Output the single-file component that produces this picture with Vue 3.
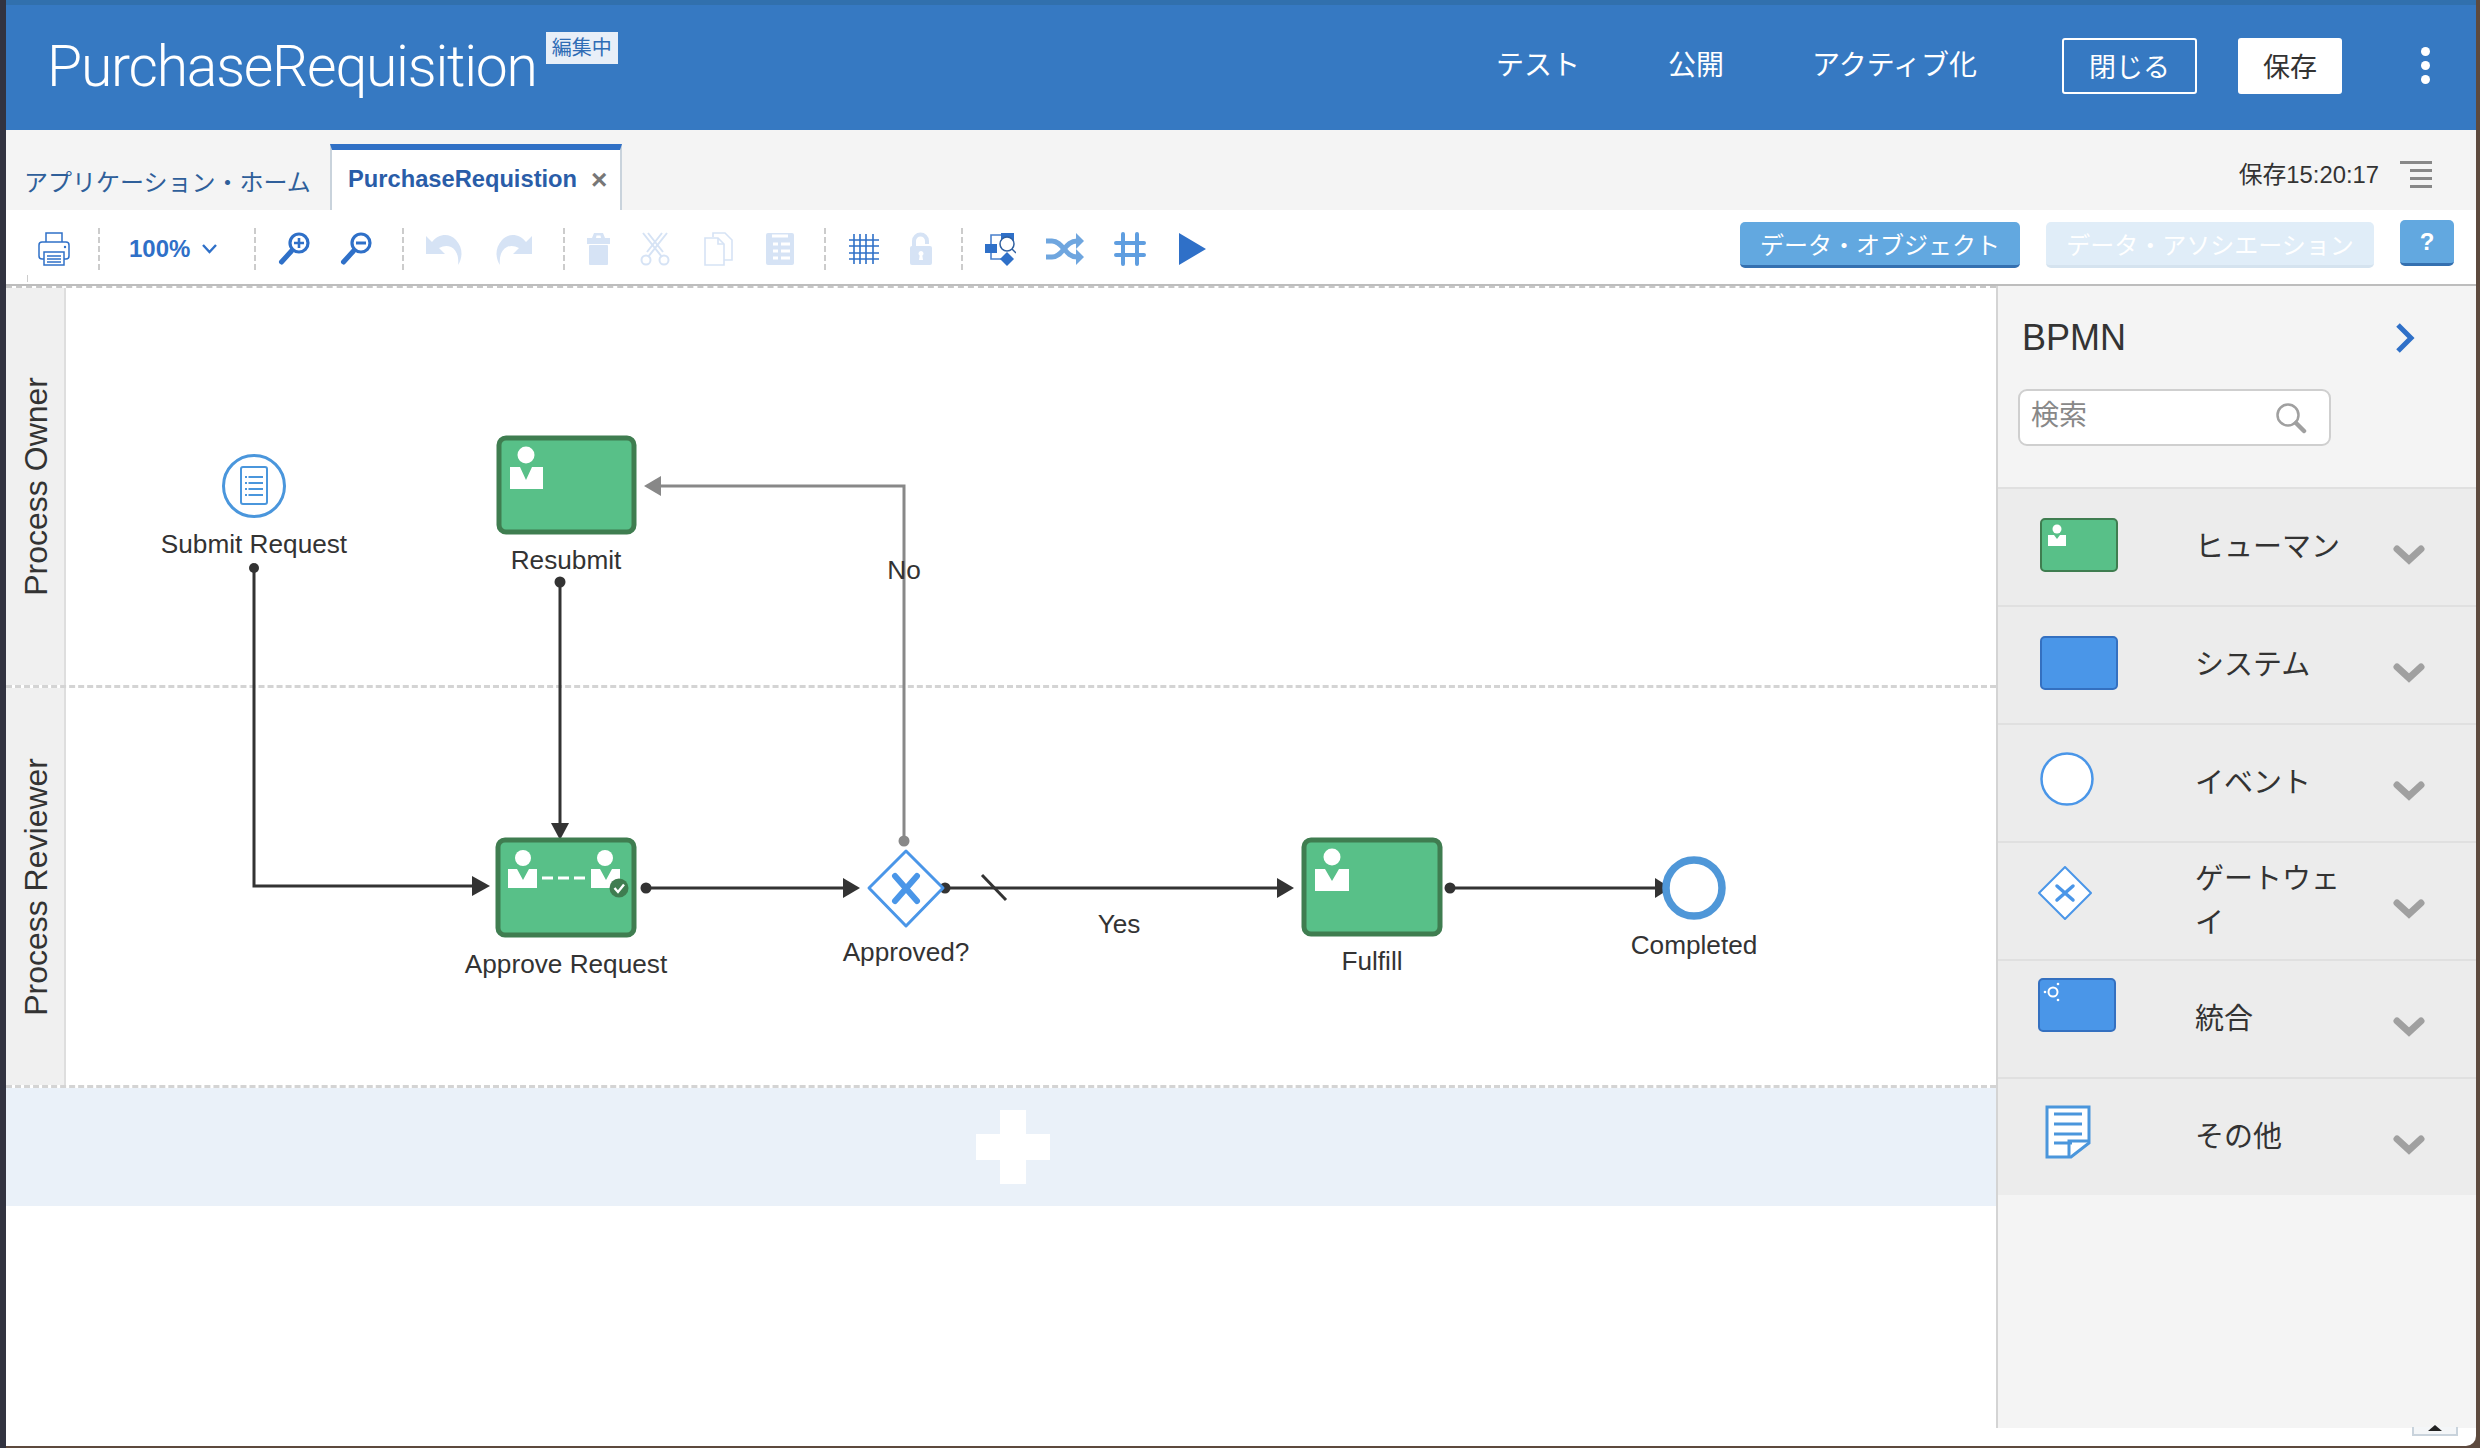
<script setup>
const navItems = ['テスト', '公開', 'アクティブ化']

const paletteRows = [
  { key: 'human', label: 'ヒューマン' },
  { key: 'system', label: 'システム' },
  { key: 'event', label: 'イベント' },
  { key: 'gateway', label: 'ゲートウェイ' },
  { key: 'integration', label: '統合' },
  { key: 'other', label: 'その他' }
]
</script>

<template>
  <div class="page">
    <div class="window">
      <header class="topbar">
        <div class="brand">
          <h1 class="app-title">PurchaseRequisition</h1>
          <span class="badge">編集中</span>
        </div>
        <nav class="nav">
          <a v-for="item in navItems" :key="item" class="nav-link">{{ item }}</a>
        </nav>
        <button class="btn-close">閉じる</button>
        <button class="btn-save">保存</button>
        <div class="more"><i></i><i></i><i></i></div>
      </header>

      <div class="tabs">
        <div class="tab-home">アプリケーション・ホーム</div>
        <div class="tab-active">
          <span class="tab-name">PurchaseRequistion</span>
          <span class="tab-x">×</span>
        </div>
        <div class="status">保存15:20:17</div>
        <div class="status-menu"><i></i><i></i><i></i><i></i></div>
      </div>

      <div class="toolbar">
        <span class="tick"></span>
        <div class="tool-group g1">
          <svg width="32" height="34" viewBox="0 0 32 34" fill="none" stroke="#2f70c8" stroke-width="1.5">
            <path d="M8 10V1h16v9" />
            <rect x="1" y="10" width="30" height="17" rx="3" />
            <rect x="6" y="20" width="20" height="13" fill="#fff" />
            <path d="M9 24h14M9 27h14M9 30h14" />
            <circle cx="27" cy="15" r="1.2" fill="#2f70c8" stroke="none" />
          </svg>
        </div>
        <span class="sep"></span>
        <div class="tool-group g2">
          <span class="zoom-value">100%</span>
          <svg width="15" height="10" viewBox="0 0 15 10" fill="none" stroke="#2f70c8" stroke-width="2.4">
            <path d="M1 1l6.500 7L14 1" />
          </svg>
        </div>
        <span class="sep"></span>
        <div class="tool-group">
          <svg width="32" height="34" viewBox="0 0 32 34" fill="none" stroke="#2f70c8">
            <circle cx="21" cy="11" r="9" stroke-width="3.200" />
            <path d="M13.500 19L3.500 30" stroke-width="5" stroke-linecap="round" />
            <path d="M21 6v10M16 11h10" stroke-width="2.600" />
          </svg>
          <svg width="32" height="34" viewBox="0 0 32 34" fill="none" stroke="#2f70c8">
            <circle cx="21" cy="11" r="9" stroke-width="3.200" />
            <path d="M13.500 19L3.500 30" stroke-width="5" stroke-linecap="round" />
            <path d="M16 11h10" stroke-width="3" />
          </svg>
        </div>
        <span class="sep"></span>
        <div class="tool-group">
          <svg width="38" height="34" viewBox="0 0 38 34" fill="#d6e3f5">
            <path d="M0 4l6 6C12 2 23 0 30 8c8 9 6 19 2 25 1-8-1-15-7-18-4-2-8-1-12 1l6 6H0z" />
          </svg>
          <svg width="39" height="34" viewBox="0 0 39 34" fill="#d6e3f5">
            <path d="M38 4l-6 6C26 2 15 0 8 8c-8 9-6 19-2 25-1-8 1-15 7-18 4-2 8-1 12 1l-6 6h19z" />
          </svg>
        </div>
        <span class="sep"></span>
        <div class="tool-group">
          <svg width="23" height="34" viewBox="0 0 23 34" fill="#d6e3f5">
            <path d="M7 1h9l2 5h5v6H0V6h5zM9.500 3.500L9 6h5l-.5-2.500z" fill-rule="evenodd" />
            <rect x="2" y="13" width="19" height="20" rx="1" />
          </svg>
          <svg width="30" height="34" viewBox="0 0 30 34" fill="none" stroke="#d6e3f5" stroke-width="2">
            <path d="M3 1l19 24M8 1l15 19M27 1L8 25M22 1L7 20" />
            <circle cx="6" cy="28" r="4.500" />
            <circle cx="24" cy="28" r="4.500" />
          </svg>
          <svg width="36" height="34" viewBox="0 0 36 34" fill="none" stroke="#d6e3f5" stroke-width="1.600">
            <path d="M13 5V1h12l7 7v20h-8" />
            <path d="M5 6h13l6 6v21H5z" fill="#fff" />
            <path d="M18 6v6h6" />
          </svg>
          <svg width="28" height="34" viewBox="0 0 28 34">
            <rect y="1" width="28" height="32" rx="2" fill="#d6e3f5" />
            <path d="M6 4h16M7 12h5M15 12h9M7 19h5M15 19h9M7 26h5M15 26h9" stroke="#fff" stroke-width="3" />
          </svg>
        </div>
        <span class="sep"></span>
        <div class="tool-group g6">
          <svg width="31" height="34" viewBox="0 0 31 34" fill="none" stroke="#2f70c8" stroke-width="1.600">
            <path d="M6 2v30M12 2v30M18 2v30M25 2v30" />
            <path d="M1 8h30M1 14h30M1 21h30M1 27h30" />
          </svg>
          <svg width="24" height="34" viewBox="0 0 24 34" fill="#d6e3f5">
            <path d="M3 15V9a8.500 8.500 0 0 1 17 0v3h-4V9a4.500 4.500 0 0 0-9 0v6z" />
            <rect x="1" y="14" width="22" height="19" rx="2" />
            <path d="M12 19a2.500 2.500 0 0 1 1.300 4.600L14 28h-4l.7-4.400A2.500 2.500 0 0 1 12 19z" fill="#fff" />
          </svg>
        </div>
        <span class="sep"></span>
        <div class="tool-group">
          <svg width="31" height="34" viewBox="0 0 31 34">
            <path d="M6 12V3h10M6 20v7h10" fill="none" stroke="#4a80cc" stroke-width="1.600" />
            <rect x="16" y="1" width="13" height="10" fill="#2f70c8" />
            <rect y="12" width="12" height="9" fill="#2f70c8" />
            <path d="M22 20l7 7-7 7-7-7z" fill="#2f70c8" />
            <circle cx="22" cy="12" r="7" fill="#fff" stroke="#2f5f9f" stroke-width="1.500" />
            <path d="M27 17l4 4" stroke="#2f5f9f" stroke-width="1.500" />
          </svg>
          <svg width="38" height="34" viewBox="0 0 38 34" fill="none" stroke="#6fa6df" stroke-width="5">
            <path d="M0 9h6c11 0 13 16 25 16" />
            <path d="M0 25h6c11 0 13-16 25-16" />
            <path d="M30 1l8 8-8 8zM30 17l8 8-8 8z" fill="#6fa6df" stroke="none" />
          </svg>
          <svg width="32" height="34" viewBox="0 0 32 34" fill="none" stroke="#5f9ee0" stroke-width="4" stroke-linecap="round">
            <path d="M9 2v30M23 2v30M2 11h28M2 23h28" />
          </svg>
          <svg width="30" height="34" viewBox="0 0 30 34">
            <path d="M3 1l27 16L3 33z" fill="#2f70c8" />
          </svg>
        </div>
        <div class="tool-actions">
          <button class="tool-btn">データ・オブジェクト</button>
          <button class="tool-btn is-disabled">データ・アソシエーション</button>
          <button class="tool-btn is-help">?</button>
        </div>
      </div>

      <div class="workspace">
        <section class="canvas">
          <div class="lane lane-owner">
            <div class="lane-head"><span>Process Owner</span></div>
          </div>
          <div class="lane lane-reviewer">
            <div class="lane-head"><span>Process Reviewer</span></div>
          </div>
          <div class="add-lane">
            <svg width="74" height="74" viewBox="0 0 74 74" fill="#fff">
              <path d="M24 0h26v24h24v26H50v24H24V50H0V24h24z" />
            </svg>
          </div>

          <svg class="diagram" width="1990" height="920" viewBox="6 286 1990 920">
            <!-- flows -->
            <g fill="none" stroke="#333" stroke-width="3">
              <path d="M254 568V886H474" />
              <path d="M560 582V824" />
              <path d="M646 888H845" />
              <path d="M945 888H1279" />
              <path d="M1450 888H1658" />
              <path d="M982 875l24 25" />
            </g>
            <path d="M904 841V486H658" fill="none" stroke="#888" stroke-width="3" />
            <g fill="#333">
              <circle cx="254" cy="568" r="5" />
              <circle cx="560" cy="582" r="5.500" />
              <circle cx="646" cy="888" r="5.500" />
              <circle cx="945" cy="888" r="5.500" />
              <circle cx="1450" cy="888" r="5.500" />
              <path d="M472 876l18 10-18 10z" />
              <path d="M551 823h18l-9 17z" />
              <path d="M843 878l17 10-17 10z" />
              <path d="M1277 878l17 10-17 10z" />
              <path d="M1655 878l16 10-16 10z" />
            </g>
            <circle cx="904" cy="841" r="5.500" fill="#888" />
            <path d="M644 486l17-10v20z" fill="#888" />

            <!-- start event -->
            <circle cx="254" cy="486" r="30.500" fill="#fff" stroke="#4a96dc" stroke-width="3" />
            <rect x="241" y="467" width="26" height="37" rx="2" fill="#fff" stroke="#4a96dc" stroke-width="2" />
            <path d="M245 477h18M245 483h18M245 489h18M245 495h18" stroke="#4a96dc" stroke-width="2" stroke-dasharray="2 1.500 14 0" />

            <!-- tasks -->
            <rect class="task" x="499" y="438" width="135" height="94" rx="7" />
            <g class="person">
              <ellipse cx="526" cy="455" rx="8.500" ry="8.500" />
              <path d="M510 467h10l6 13 6-13h11v22h-33z" />
            </g>

            <rect class="task" x="498" y="840" width="136" height="95" rx="7" />
            <g class="person">
              <ellipse cx="523" cy="858" rx="8" ry="8" />
              <path d="M508 869h9l6 11 6-11h8v19h-29z" />
              <ellipse cx="605" cy="858" rx="8" ry="8" />
              <path d="M591 869h9l6 11 6-11h8v19h-29z" />
            </g>
            <path d="M542 878h43" stroke="#fff" stroke-width="3" stroke-dasharray="11 5" />
            <circle cx="619" cy="888" r="9.500" fill="#3f7d50" />
            <path d="M614.500 888l3.500 4 6-7.500" fill="none" stroke="#fff" stroke-width="2.400" />

            <rect class="task" x="1304" y="840" width="136" height="94" rx="7" />
            <g class="person">
              <ellipse cx="1332" cy="857" rx="8.500" ry="8.500" />
              <path d="M1315 869h10l7 12 7-12h10v22h-34z" />
            </g>

            <!-- gateway -->
            <path d="M906 851l37 37-37 38-37-38z" fill="#fff" stroke="#4a96e8" stroke-width="3" stroke-linejoin="round" />
            <path d="M895 876l22 25M917 876l-22 25" stroke="#4a96e8" stroke-width="6" stroke-linecap="round" />

            <!-- end event -->
            <circle cx="1694" cy="888" r="28" fill="#fff" stroke="#4f97d8" stroke-width="7.500" />

            <!-- labels -->
            <g class="flow-label">
              <text x="254" y="553">Submit Request</text>
              <text x="566" y="569">Resubmit</text>
              <text x="904" y="579">No</text>
              <text x="566" y="973">Approve Request</text>
              <text x="906" y="961">Approved?</text>
              <text x="1119" y="933">Yes</text>
              <text x="1372" y="970">Fulfill</text>
              <text x="1694" y="954">Completed</text>
            </g>
          </svg>
        </section>

        <aside class="palette">
          <div class="palette-head">
            <h2 class="palette-title">BPMN</h2>
            <svg width="20" height="30" viewBox="0 0 20 30" fill="none" stroke="#2f70c8" stroke-width="5">
              <path d="M3 2l13 13L3 28" />
            </svg>
          </div>
          <div class="search">
            <span class="search-text">検索</span>
            <svg width="32" height="32" viewBox="0 0 32 32" fill="none" stroke="#a0a0a0">
              <circle cx="13" cy="13" r="10.500" stroke-width="2.500" />
              <path d="M21 21l8 8" stroke-width="4.500" stroke-linecap="round" />
            </svg>
          </div>

          <div v-for="row in paletteRows" :key="row.key" class="palette-row">
            <div class="palette-icon" :class="row.key">
              <svg v-if="row.key === 'human'" width="78" height="54" viewBox="0 0 78 54">
                <rect x="1" y="1" width="76" height="52" rx="4" fill="#58c088" stroke="#3f7d50" stroke-width="2" />
                <circle cx="17" cy="11" r="4.500" fill="#fff" />
                <path d="M8 17h6l3 4 3-4h6v11H8z" fill="#fff" />
              </svg>
              <svg v-else-if="row.key === 'system'" width="78" height="54" viewBox="0 0 78 54">
                <rect x="1" y="1" width="76" height="52" rx="4" fill="#4a96e8" stroke="#3470c0" stroke-width="2" />
              </svg>
              <svg v-else-if="row.key === 'event'" width="54" height="54" viewBox="0 0 54 54">
                <circle cx="27" cy="27" r="25.500" fill="#fff" stroke="#4a96e8" stroke-width="2.500" />
              </svg>
              <svg v-else-if="row.key === 'gateway'" width="54" height="54" viewBox="0 0 54 54">
                <path d="M27 1l26 26-26 26L1 27z" fill="#fff" stroke="#4a96e8" stroke-width="2" stroke-linejoin="round" />
                <path d="M19 20l16 14M35 20L19 34" stroke="#4a96e8" stroke-width="3.500" stroke-linecap="round" />
              </svg>
              <svg v-else-if="row.key === 'integration'" width="78" height="54" viewBox="0 0 78 54">
                <rect x="1" y="1" width="76" height="52" rx="4" fill="#4a96e8" stroke="#3470c0" stroke-width="2" />
                <circle cx="15" cy="14" r="4.500" fill="none" stroke="#fff" stroke-width="2" />
                <circle cx="7" cy="14" r="1.300" fill="#fff" />
                <circle cx="20" cy="6" r="1.300" fill="#fff" />
                <circle cx="20" cy="22" r="1.300" fill="#fff" />
              </svg>
              <svg v-else width="46" height="54" viewBox="0 0 46 54">
                <path d="M2 2h42v36L26 52H2z" fill="#fff" stroke="#4a96dc" stroke-width="3" />
                <path d="M9 9h28M9 19h28M9 29h28M9 38h18" stroke="#4a96dc" stroke-width="3" />
                <path d="M24 52V36h20" fill="none" stroke="#4a96dc" stroke-width="3" />
              </svg>
            </div>
            <span class="palette-label">{{ row.label }}</span>
            <svg class="palette-chevron" width="32" height="22" viewBox="0 0 32 22" fill="none" stroke="#a0a0a0" stroke-width="7" stroke-linecap="round" stroke-linejoin="miter">
              <path d="M4 4l12 11L28 4" />
            </svg>
          </div>
        </aside>
      </div>

      <div class="collapse-tab"><i></i></div>
    </div>
  </div>
</template>

<style>
html,
body {
  margin: 0;
  background: #5d4a3e;
}
</style>

<style scoped>
.page {
  width: 2480px;
  height: 1448px;
  border-left: 6px solid #323340;
  box-sizing: border-box;
  overflow: hidden;
  font-family: "Liberation Sans", "Noto Sans CJK JP", sans-serif;
  color: #333;
}

.window {
  position: relative;
  display: flex;
  flex-direction: column;
  width: 2470px;
  height: 1446px;
  background: #fff;
  border-bottom-right-radius: 10px;
  overflow: hidden;
}

.topbar {
  display: flex;
  align-items: center;
  box-sizing: border-box;
  height: 130px;
  padding-right: 46px;
  border-top: 5px solid #3170ad;
  background: #3679c2;
  color: #fff;
}

.brand {
  display: flex;
  align-items: flex-start;
  flex: 1;
  padding-left: 41px;
}

.app-title {
  margin: -2px 0 0;
  font-family: Roboto, "Liberation Sans", sans-serif;
  font-size: 57px;
  font-weight: 300;
  line-height: 64px;
  letter-spacing: -1.2px;
}

.badge {
  margin: -5px 0 0 9px;
  padding: 0 6px;
  height: 32px;
  line-height: 32px;
  background: #e8eff8;
  color: #2f6cb5;
  font-size: 20px;
}

.nav {
  display: flex;
  gap: 88px;
  margin: -3px 85px 0 0;
}

.nav-link {
  font-size: 28px;
  line-height: 40px;
}

.btn-close,
.btn-save {
  box-sizing: border-box;
  height: 56px;
  margin-top: -4px;
  border-radius: 3px;
  font-family: inherit;
  font-size: 27px;
}

.btn-close {
  width: 135px;
  border: 2px solid #fff;
  background: transparent;
  color: #fff;
}

.btn-save {
  width: 104px;
  margin-left: 41px;
  border: 0;
  background: #fff;
  color: #333;
}

.more {
  display: flex;
  flex-direction: column;
  gap: 5px;
  margin: -4px 0 0 79px;
}

.more i {
  display: block;
  width: 9px;
  height: 9px;
  border-radius: 50%;
  background: #fff;
}

.tabs {
  display: flex;
  align-items: flex-end;
  height: 80px;
  background: #f4f4f4;
}

.tab-home {
  width: 306px;
  padding-left: 18px;
  height: 80px;
  line-height: 106px;
  font-size: 24px;
  color: #2f5f9a;
  box-sizing: content-box;
}

.tab-active {
  display: flex;
  align-items: center;
  box-sizing: border-box;
  width: 292px;
  height: 66px;
  padding: 0 0 1px 16px;
  border-top: 6px solid #3070c6;
  border-left: 2px solid #c9d3dc;
  border-right: 2px solid #c9d3dc;
  background: #fff;
}

.tab-name {
  width: 243px;
  font-size: 23.700px;
  font-weight: 700;
  color: #2a5da8;
}

.tab-x {
  font-size: 28px;
  line-height: 30px;
  font-weight: 700;
  color: #777;
}

.status {
  margin: 0 21px 18px auto;
  font-size: 23.800px;
  line-height: 34px;
  color: #333;
}

.status-menu {
  display: flex;
  flex-direction: column;
  align-items: flex-end;
  gap: 5px;
  width: 32px;
  margin: 0 44px 22px 0;
}

.status-menu i {
  display: block;
  width: 22px;
  height: 3px;
  background: #888;
}

.status-menu i:first-child {
  width: 32px;
}

.toolbar {
  position: relative;
  display: flex;
  align-items: center;
  box-sizing: border-box;
  height: 76px;
  padding: 3px 0 0 32px;
  border-bottom: 2px solid #bdbdbd;
  background: #fff;
}

.tick {
  position: absolute;
  left: 21px;
  bottom: 2px;
  height: 7px;
  border-left: 1px solid #ccc;
}

.tool-group {
  display: flex;
  align-items: center;
  gap: 30px;
  padding: 0 30px 0 22px;
}

.g1 {
  padding: 0 28px 0 0;
}

.g2 {
  gap: 12px;
  padding: 0 37px 0 29px;
}

.g6 {
  padding-right: 28px;
}

.sep {
  height: 42px;
  border-left: 2px dashed #cccccc;
}

.zoom-value {
  font-size: 24px;
  font-weight: 700;
  color: #2f70c8;
}

.tool-actions {
  display: flex;
  align-items: flex-start;
  gap: 26px;
  margin: -7px 22px 0 auto;
}

.tool-btn {
  box-sizing: border-box;
  width: 280px;
  height: 46px;
  border: 0;
  border-bottom: 3px solid #3470b0;
  border-radius: 5px;
  background: #62a8e0;
  color: #fff;
  font-family: inherit;
  font-size: 24px;
}

.tool-btn.is-disabled {
  width: 328px;
  border-bottom-color: #d5e3ef;
  background: #e0edf8;
}

.tool-btn.is-help {
  width: 54px;
  margin-top: -2px;
  font-weight: 700;
}

.workspace {
  display: flex;
  align-items: flex-start;
  flex: 1;
}

.canvas {
  position: relative;
  width: 1990px;
}

.lane {
  box-sizing: border-box;
  border-bottom: 3px dashed #d4d4d4;
}

.lane-owner {
  height: 402px;
  border-top: 2px dashed #c8c8c8;
}

.lane-reviewer {
  height: 400px;
}

.lane-head {
  display: flex;
  align-items: center;
  justify-content: center;
  box-sizing: border-box;
  width: 60px;
  height: 100%;
  background: #f0f0f0;
  border-right: 2px solid #dedede;
}

.lane-head span {
  writing-mode: vertical-rl;
  transform: rotate(180deg);
  margin-left: 2px;
  font-size: 32px;
  color: #333;
  white-space: nowrap;
}

.add-lane {
  display: flex;
  align-items: center;
  justify-content: center;
  height: 118px;
  padding-left: 24px;
  background: #eaf1f9;
}

.diagram {
  position: absolute;
  left: 0;
  top: 0;
}

.task {
  fill: #58c088;
  stroke: #3f7d50;
  stroke-width: 5;
}

.person {
  fill: #fff;
}

.flow-label {
  font-size: 26.200px;
  fill: #333;
  text-anchor: middle;
}

.palette {
  box-sizing: border-box;
  width: 480px;
  height: 1142px;
  border-left: 2px solid #d4d4d4;
  background: #f4f4f4;
}

.palette-head {
  display: flex;
  align-items: center;
  justify-content: space-between;
  height: 44px;
  padding: 30px 61px 0 24px;
}

.palette-title {
  margin: 0;
  font-size: 36px;
  font-weight: 400;
  line-height: 44px;
  color: #333;
}

.search {
  display: flex;
  align-items: center;
  justify-content: space-between;
  box-sizing: border-box;
  width: 313px;
  height: 57px;
  margin: 29px 0 41px 20px;
  padding: 0 22px 0 11px;
  border: 2px solid #cfcfcf;
  border-radius: 9px;
  background: #fff;
}

.search-text {
  font-size: 28px;
  line-height: 34px;
  margin-top: -3px;
  color: #888;
}

.palette-row {
  display: flex;
  align-items: flex-start;
  box-sizing: border-box;
  height: 118px;
  border-top: 2px solid #e0e0e0;
  background: #ececec;
}

.palette-icon {
  width: 197px;
  padding-left: 42px;
  box-sizing: border-box;
  line-height: 0;
}

.palette-icon svg {
  display: block;
}

.palette-icon.human {
  padding-top: 29px;
}

.palette-icon.system {
  padding-top: 29px;
}

.palette-icon.event {
  padding-top: 27px;
}

.palette-icon.gateway {
  padding-top: 23px;
  padding-left: 40px;
}

.palette-icon.integration {
  padding-top: 17px;
  padding-left: 40px;
}

.palette-icon.other {
  padding-top: 26px;
  padding-left: 47px;
}

.palette-label {
  display: flex;
  align-items: center;
  width: 160px;
  height: 116px;
  margin-right: 38px;
  font-size: 29px;
  line-height: 44px;
  color: #333;
}

.palette-chevron {
  margin-top: 56px;
}

.collapse-tab {
  position: absolute;
  left: 2406px;
  top: 1427px;
  display: flex;
  justify-content: center;
  box-sizing: border-box;
  width: 46px;
  height: 9px;
  border: 2px solid #c9d3dc;
  border-top: 0;
  background: #f4f6f8;
}

.collapse-tab i {
  width: 0;
  height: 0;
  margin-top: -2px;
  border-left: 7px solid transparent;
  border-right: 7px solid transparent;
  border-bottom: 6px solid #222;
}
</style>
